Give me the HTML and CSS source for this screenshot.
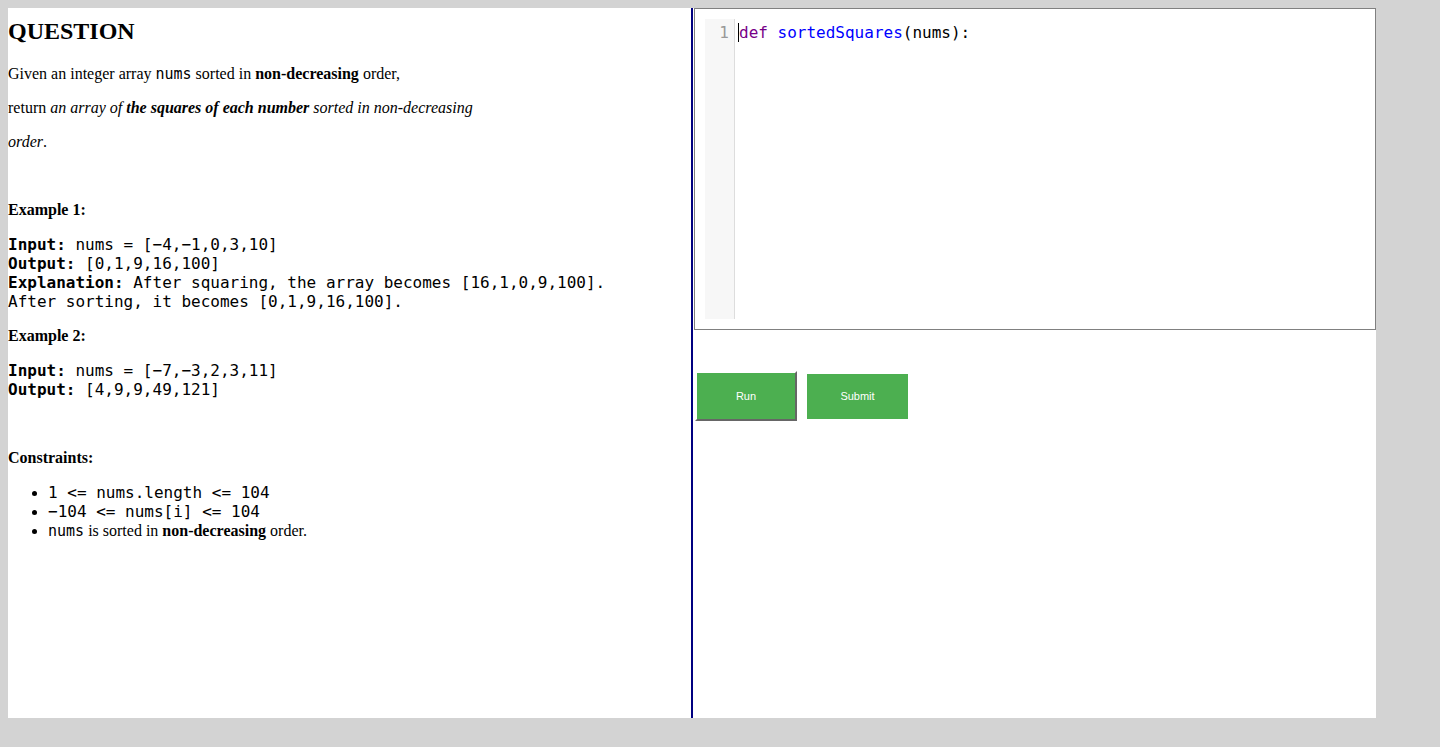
FILE: index.html
```html
<!DOCTYPE html>
<html lang="en">
<head>
<meta charset="utf-8">
<title>Question</title>
<link rel="stylesheet" href="styles.css">
</head>
<body>
<div class="app">
  <div class="left">
    <h2 class="title">QUESTION</h2>
    <p>Given an integer array <code class="ic">nums</code> sorted in <strong>non-decreasing</strong> order,</p>
    <p>return <em>an array of <strong>the squares of each number</strong> sorted in non-decreasing</em></p>
    <p><em>order</em>.</p>
    <p>&nbsp;</p>
    <p><strong>Example 1:</strong></p>
    <pre><strong>Input:</strong> nums = [−4,−1,0,3,10]
<strong>Output:</strong> [0,1,9,16,100]
<strong>Explanation:</strong> After squaring, the array becomes [16,1,0,9,100].
After sorting, it becomes [0,1,9,16,100].</pre>
    <p><strong>Example 2:</strong></p>
    <pre><strong>Input:</strong> nums = [−7,−3,2,3,11]
<strong>Output:</strong> [4,9,9,49,121]</pre>
    <p>&nbsp;</p>
    <p><strong>Constraints:</strong></p>
    <ul class="constraints">
      <li><code class="lc">1 &lt;= nums.length &lt;= 104</code></li>
      <li><code class="lc">−104 &lt;= nums[i] &lt;= 104</code></li>
      <li><code class="ic">nums</code> is sorted in <strong>non-decreasing</strong> order.</li>
    </ul>
  </div>
  <div class="right">
    <div class="editor">
      <div class="editor-inner">
        <div class="gutter"><div class="lineno">1</div></div>
        <div class="code"><div class="line"><span class="cursor"></span><span class="kw">def</span> <span class="fn">sortedSquares</span>(nums):</div></div>
      </div>
    </div>
    <div class="actions">
      <button class="btn btn-run">Run</button>
      <button class="btn btn-submit">Submit</button>
    </div>
  </div>
</div>
</body>
</html>
```
FILE: styles.css
```css
html, body {
  margin: 0;
  padding: 0;
}
body {
  margin: 8px;
  background: #d3d3d3;
  font-family: "Liberation Serif", "Times New Roman", serif;
  font-size: 16px;
  color: #000;
}
.app {
  display: flex;
  width: 1368px;
  height: 710px;
  background: #fff;
}
.left {
  flex: 0 0 683px;
  border-right: 2px solid #000080;
  overflow: hidden;
}
.title {
  font-size: 24px;
  font-weight: bold;
  margin: 10px 0 20px;
}
p {
  margin: 16px 0;
}
.title + p {
  margin-top: 0;
}
code, pre {
  font-family: "DejaVu Sans Mono", monospace;
}
.ic {
  font-size: 15px;
}
.lc {
  font-size: 16px;
}
pre {
  font-size: 16px;
  line-height: 19px;
  margin: 16px 0;
}
.constraints {
  margin: 15px 0 16px;
  padding-left: 40px;
}
.constraints li {
  line-height: 19px;
}
.right {
  flex: 1 1 auto;
  padding-left: 1px;
}
.editor {
  border: 1px solid #808080;
  padding: 10px;
}
.editor-inner {
  display: flex;
  height: 300px;
}
.gutter {
  width: 29px;
  background: #f7f7f7;
  border-right: 1px solid #ddd;
  padding-top: 4px;
}
.lineno {
  font-family: "DejaVu Sans Mono", monospace;
  font-size: 16px;
  line-height: 19px;
  color: #999;
  text-align: right;
  padding-right: 5px;
}
.code {
  flex: 1;
  padding: 4px 4px 0 3px;
  font-family: "DejaVu Sans Mono", monospace;
  font-size: 16px;
  line-height: 19px;
  color: #000;
}
.line {
  position: relative;
  padding-left: 1px;
}
.cursor {
  position: absolute;
  left: 0;
  top: 0;
  width: 1px;
  height: 19px;
  background: #000;
}
.kw { color: #770088; }
.fn { color: #0000ff; }
.actions {
  display: flex;
  align-items: center;
  gap: 10px;
  margin-top: 41px;
  padding-left: 1px;
}
.btn {
  background: #4caf50;
  color: #fff;
  font-family: "Liberation Sans", Arial, sans-serif;
  font-size: 11px;
  box-sizing: border-box;
  margin: 0;
  padding: 0;
  cursor: pointer;
}
.btn-run {
  width: 102px;
  height: 50px;
  border-style: solid;
  border-width: 2px;
  border-color: #fff #666 #666 #fff;
}
.btn-submit {
  width: 101px;
  height: 45px;
  border: none;
}
```
